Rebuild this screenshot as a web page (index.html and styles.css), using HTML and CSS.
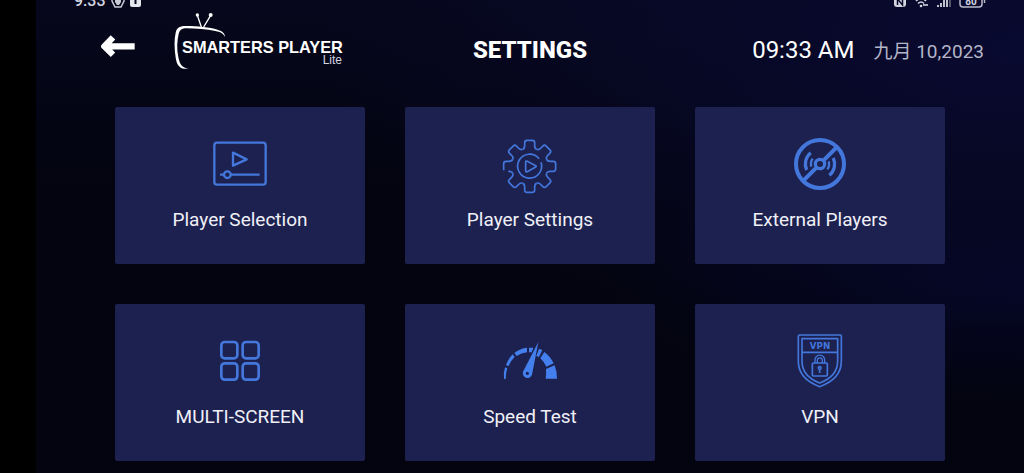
FILE: index.html
```
<!DOCTYPE html>
<html lang="en">
<head>
    <meta charset="UTF-8">
    <meta name="viewport" content="width=device-width, initial-scale=1.0">
    <title>Smarters Player Lite - Settings</title>
    <link rel="stylesheet" href="styles.css">
</head>
<body>
    <div class="screen">
        <div class="status-bar">
            <div class="status-group">
                <span>9:33</span>
                <svg width="14" height="14" viewBox="0 0 14 14">
                    <path d="M1 1h12v6l-3 6H4L1 7z" fill="none" stroke="#c9cad6" stroke-width="1.5"/>
                    <path d="M4 3h6v5l-2 3H6L4 8z" fill="#c9cad6"/>
                </svg>
                <svg width="12" height="14" viewBox="0 0 12 14">
                    <rect x="0" y="0" width="11" height="13" rx="2" fill="#e4e4ec"/>
                    <path d="M5.5 3v7" stroke="#05061a" stroke-width="2"/>
                </svg>
            </div>
            <div class="status-group status-right">
                <svg width="14" height="14" viewBox="0 0 14 14">
                    <rect x="1" y="1" width="12" height="12" rx="3" fill="#d4d5e0"/>
                    <path d="M4.5 11V5l5 6V4" fill="none" stroke="#0a0a2c" stroke-width="1.5"/>
                </svg>
                <svg width="14" height="14" viewBox="0 0 14 14">
                    <path d="M1 7q5-5 10 0M3 9.5q3-3 6 0" fill="none" stroke="#d4d5e0" stroke-width="1.5"/>
                    <circle cx="6" cy="12" r="1.3" fill="#d4d5e0"/>
                    <path d="M8 11h5" stroke="#a9aabb" stroke-width="2"/>
                </svg>
                <svg width="14" height="14" viewBox="0 0 14 14">
                    <path d="M1 13v-2M4 13V9M7 13V6M10 13V3" stroke="#d4d5e0" stroke-width="1.8"/>
                    <path d="M13 13V1" stroke="#6b6c84" stroke-width="1.5"/>
                </svg>
                <svg width="27" height="14" viewBox="0 0 27 14">
                    <rect x="1" y="1" width="22" height="12" rx="3" fill="none" stroke="#b9bac8" stroke-width="1.5"/>
                    <text class="battery-text" x="12" y="11" text-anchor="middle">80</text>
                    <path d="M25.5 5v4" stroke="#b9bac8" stroke-width="1.5"/>
                </svg>
            </div>
        </div>

        <header class="header">
            <div class="header-left">
                <button class="back-button" type="button" aria-label="Back">
                    <svg width="34" height="24" viewBox="302 102 102 72">
                        <path d="M403 139H318M338 112L312 139L338 164" fill="none" stroke="#fff" stroke-width="19" stroke-linejoin="round"/>
                    </svg>
                </button>
                <svg class="logo" width="170" height="57" viewBox="522 38 510 171" role="img" aria-label="Smarters Player Lite">
                    <path d="M566 205C540 208 531 197 527 172C523 145 522 118 527 97C531 81 540 77 558 77C595 77 628 81 653 88C668 93 675 99 675 110C670 99 661 95 646 92C620 87 588 84 560 84C546 84 539 88 536 101C531 122 530 147 535 170C539 192 546 203 566 205Z" fill="#fff"/>
                    <path d="M592 45L604 80M632 45L611 80" fill="none" stroke="#fff" stroke-width="4"/>
                    <circle cx="592" cy="44" r="5" fill="#fff"/>
                    <circle cx="632" cy="44" r="6" fill="#fff"/>
                    <text class="logo-name" x="546" y="158">SMARTERS PLAYER</text>
                    <text class="logo-lite" x="1026" y="192" text-anchor="end">Lite</text>
                </svg>
            </div>
            <h1 class="title">SETTINGS</h1>
            <div class="clock">
                <span class="time">09:33 AM</span>
                <span class="date">九月 10,2023</span>
            </div>
        </header>

        <main class="grid">
            <button class="card" type="button">
                <svg class="icon" viewBox="159 36 162 162">
                    <rect x="163" y="53" width="154" height="126" rx="8" stroke-width="7"/>
                    <path d="M219 83V122L260 103Z" stroke-width="7" stroke-linejoin="round"/>
                    <path d="M180 149H191M213 149H299" stroke-width="7"/>
                    <circle cx="202" cy="149" r="10" stroke-width="7"/>
                </svg>
                <span>Player Selection</span>
            </button>
            <button class="card" type="button">
                <svg class="icon" viewBox="156 36 162 162">
                    <defs>
                        <path id="tooth" d="M-21 -51C-14 -53 -15 -59 -15 -65V-71Q-15 -78 -8 -78H8Q15 -78 15 -71V-65C15 -59 14 -53 21 -51"/>
                    </defs>
                    <g transform="translate(236 124)" stroke-width="5">
                        <use href="#tooth"/>
                        <use href="#tooth" transform="rotate(45)"/>
                        <use href="#tooth" transform="rotate(90)"/>
                        <use href="#tooth" transform="rotate(135)"/>
                        <use href="#tooth" transform="rotate(180)"/>
                        <use href="#tooth" transform="rotate(225)"/>
                        <use href="#tooth" transform="rotate(315)"/>
                        <path d="M-51 -21C-53 -14 -59 -15 -65 -15H-71Q-78 -15 -78 -8V12M-64 15C-59 15 -53 14 -51 21"/>
                        <path d="M34 -12A36 36 0 1 1 28 -23"/>
                        <path d="M-12 -12Q-12 -18 -7 -15L18 -2Q22 0 18 2L-7 16Q-12 18 -12 13Z"/>
                    </g>
                </svg>
                <span>Player Settings</span>
            </button>
            <button class="card" type="button">
                <svg class="icon" viewBox="159 36 162 162">
                    <g transform="translate(240 117)" stroke-width="12">
                        <circle r="72"/>
                        <path d="M10 -10L51 -51M-10 10L-51 51"/>
                        <circle r="14" stroke-width="10"/>
                        <path d="M-28 -34A44 44 0 0 0 -40 18M28 34A44 44 0 0 0 40 -18" stroke-width="10"/>
                        <path d="M-22 -16A27 27 0 0 0 -26 8M22 16A27 27 0 0 0 26 -8" stroke-width="7"/>
                    </g>
                </svg>
                <span>External Players</span>
            </button>
            <button class="card" type="button">
                <svg class="icon" viewBox="159 27 162 162" stroke-width="8">
                    <rect x="184" y="51" width="48" height="49" rx="10"/>
                    <rect x="248" y="51" width="48" height="49" rx="10"/>
                    <rect x="184" y="115" width="48" height="49" rx="10"/>
                    <rect x="248" y="115" width="48" height="49" rx="10"/>
                </svg>
                <span>MULTI-SCREEN</span>
            </button>
            <button class="card" type="button">
                <svg class="icon icon-solid" viewBox="156 27 162 162">
                    <path d="M159 162Q157 143 162 127L169 130Q164 145 164 162Z"/>
                    <path d="M165 120Q172 101 185 88L191 96Q179 107 172 124Z"/>
                    <path d="M190 84Q207 70 228 68V82Q210 84 197 93Z"/>
                    <path d="M234 68H247L242 82H234Z"/>
                    <path d="M264 71L274 75L264 96L256 93Z"/>
                    <path d="M280 81Q298 94 308 115L286 125Q279 110 268 100Z"/>
                    <path d="M311 121Q318 140 318 161H284Q286 145 285 132Z"/>
                    <path fill-rule="evenodd" d="M262 51L243 149A14 14 0 1 1 216 140ZM229 140A5 5 0 1 0 229 150A5 5 0 1 0 229 140Z"/>
                </svg>
                <span>Speed Test</span>
            </button>
            <button class="card" type="button">
                <svg class="icon" viewBox="159 27 162 162">
                    <g stroke-width="5" stroke-linejoin="round">
                        <path d="M175 34Q175 30 179 30H300Q304 30 304 34V109C304 147 281 170 239 185C198 170 175 147 175 109Z"/>
                        <path d="M186 41H293V108C293 142 274 161 239 174C205 161 186 142 186 108Z"/>
                        <path d="M186 82H293"/>
                        <rect x="217" y="114" width="45" height="39" rx="3"/>
                        <path d="M225 114V105A14 14 0 0 1 254 105V114M232 114V106A7 7 0 0 1 247 106V114" stroke-width="4"/>
                        <circle cx="239" cy="129" r="4"/>
                        <path d="M239 134V144"/>
                    </g>
                    <text class="vpn-text" x="240" y="71" text-anchor="middle">VPN</text>
                </svg>
                <span>VPN</span>
            </button>
        </main>
    </div>
</body>
</html>
```
FILE: styles.css
```
* {
    box-sizing: border-box;
}

body {
    margin: 0;
    padding-left: 36px;
    background-color: #000;
    color: #fff;
    font-family: Roboto, "Noto Sans CJK SC", sans-serif;
}

.screen {
    min-height: 100vh;
    background-color: #03040f;
    background-image:
        radial-gradient(ellipse at 100% 10%, #090a30 0%, transparent 50%),
        radial-gradient(ellipse at 100% 60%, #050624 0%, transparent 30%),
        linear-gradient(#06071c 0%, transparent 40%);
}

/* only the lower half of the phone status bar is visible */
.status-bar {
    display: flex;
    justify-content: space-between;
    align-items: flex-end;
    height: 8px;
    padding: 0 38px;
    overflow: hidden;
    color: #d4d5e0;
    font-size: 16px;
    font-weight: 500;
    line-height: 14px;
}

.status-group {
    display: flex;
    align-items: flex-end;
    gap: 5px;
}

.status-right {
    gap: 8px;
}

.battery-text {
    fill: #d4d5e0;
    font-size: 10px;
    font-weight: bold;
}

.header {
    display: grid;
    grid-template-columns: 1fr auto 1fr;
    align-items: end;
    padding: 5px 40px 0;
}

.header-left {
    display: flex;
    align-items: flex-end;
    gap: 39px;
    padding-left: 25px;
}

.back-button {
    display: flex;
    align-items: center;
    height: 48px;
    padding: 0;
    border: none;
    background: none;
    cursor: pointer;
}

.logo text {
    fill: #fff;
    font-family: "Liberation Sans", Arial, sans-serif;
}

.logo .logo-name {
    font-size: 49px;
    font-weight: bold;
}

.logo .logo-lite {
    fill: #d4d5e0;
    font-size: 36px;
}

.title {
    margin: 0;
    font-size: 24px;
    font-weight: 800;
    line-height: 40px;
}

.clock {
    display: flex;
    justify-content: flex-end;
    align-items: baseline;
    gap: 19px;
    line-height: 36px;
}

.time {
    font-size: 24px;
}

.date {
    color: #b4b5c8;
    font-size: 19px;
}

.grid {
    display: grid;
    grid-template-columns: repeat(3, 1fr);
    gap: 40px;
    padding: 37px 79px 12px;
}

.card {
    display: flex;
    flex-direction: column;
    align-items: center;
    gap: 17px;
    padding: 30px 0 32px;
    border: none;
    border-radius: 2px;
    background-color: #1d214f;
    color: #f0f0f8;
    font-family: inherit;
    font-size: 19px;
    line-height: 24px;
    cursor: pointer;
}

.icon {
    width: 54px;
    height: 54px;
    overflow: visible;
    fill: none;
    stroke: #4377dc;
}

.icon-solid {
    fill: #4380ee;
    stroke: none;
}

.vpn-text {
    fill: #4377dc;
    stroke: none;
    font-family: "DejaVu Sans", sans-serif;
    font-size: 26px;
    font-weight: bold;
}
```
